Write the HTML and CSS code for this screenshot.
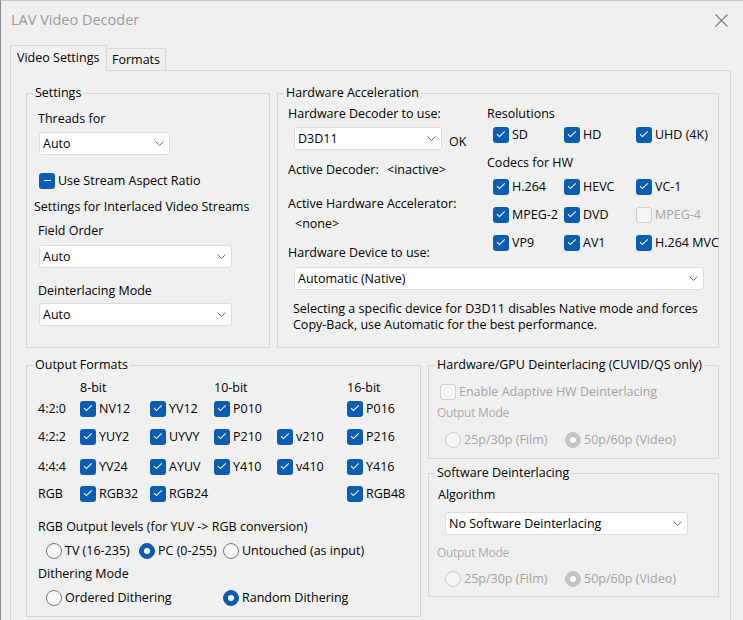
FILE: index.html
```html
<!DOCTYPE html>
<html>
<head>
<meta charset="utf-8">
<link rel="stylesheet" href="styles.css">
</head>
<body>
<div class="window">
  <div class="titlebar">
    <span class="title">LAV Video Decoder</span>
    <svg class="close" width="13" height="13" viewBox="0 0 13 13"><path d="M0.5 0.5 L12.5 12.5 M12.5 0.5 L0.5 12.5" stroke="#7a7a7a" stroke-width="1.1" fill="none"/></svg>
  </div>
  <div class="tabs">
    <div class="tab tab-active">Video Settings</div>
    <div class="tab">Formats</div>
  </div>
  <div class="page">
    <div class="row-top">
      <fieldset class="grp grp-settings">
        <legend>Settings</legend>
        <div class="s-threads-lbl">Threads for</div>
        <div class="combo combo-threads"><span>Auto</span><svg class="chev" width="9" height="5" viewBox="0 0 9 5"><path d="M0.5 0.5 L4.5 4.5 L8.5 0.5" stroke="#6a6a6a" fill="none"/></svg></div>
        <div class="chk s-aspect"><span class="cb cb-mixed"></span><span>Use Stream Aspect Ratio</span></div>
        <div class="s-inter">Settings for Interlaced Video Streams</div>
        <div class="s-field-lbl">Field Order</div>
        <div class="combo combo-field"><span>Auto</span><svg class="chev" width="9" height="5" viewBox="0 0 9 5"><path d="M0.5 0.5 L4.5 4.5 L8.5 0.5" stroke="#6a6a6a" fill="none"/></svg></div>
        <div class="s-deint-lbl">Deinterlacing Mode</div>
        <div class="combo combo-deint"><span>Auto</span><svg class="chev" width="9" height="5" viewBox="0 0 9 5"><path d="M0.5 0.5 L4.5 4.5 L8.5 0.5" stroke="#6a6a6a" fill="none"/></svg></div>
      </fieldset>
      <fieldset class="grp grp-hw">
        <legend>Hardware Acceleration</legend>
        <div class="hw-top">
          <div class="hw-left">
            <div class="hw-dec-lbl">Hardware Decoder to use:</div>
            <div class="hw-dec-row">
              <div class="combo combo-dec"><span>D3D11</span><svg class="chev" width="9" height="5" viewBox="0 0 9 5"><path d="M0.5 0.5 L4.5 4.5 L8.5 0.5" stroke="#6a6a6a" fill="none"/></svg></div>
              <span class="hw-ok">OK</span>
            </div>
            <div class="hw-active"><span class="hw-active-key">Active Decoder:</span><span>&lt;inactive&gt;</span></div>
            <div class="hw-accel">Active Hardware Accelerator:</div>
            <div class="hw-none">&lt;none&gt;</div>
            <div class="hw-dev-lbl">Hardware Device to use:</div>
          </div>
          <div class="hw-right">
            <div class="hw-res-lbl">Resolutions</div>
            <div class="cb-grid hw-res">
              <div class="chk"><span class="cb"></span><span>SD</span></div>
              <div class="chk"><span class="cb"></span><span>HD</span></div>
              <div class="chk"><span class="cb"></span><span>UHD (4K)</span></div>
            </div>
            <div class="hw-codec-lbl">Codecs for HW</div>
            <div class="cb-grid hw-codecs">
              <div class="chk"><span class="cb"></span><span>H.264</span></div>
              <div class="chk"><span class="cb"></span><span>HEVC</span></div>
              <div class="chk"><span class="cb"></span><span>VC-1</span></div>
              <div class="chk"><span class="cb"></span><span>MPEG-2</span></div>
              <div class="chk"><span class="cb"></span><span>DVD</span></div>
              <div class="chk dis"><span class="cb cb-off"></span><span>MPEG-4</span></div>
              <div class="chk"><span class="cb"></span><span>VP9</span></div>
              <div class="chk"><span class="cb"></span><span>AV1</span></div>
              <div class="chk"><span class="cb"></span><span>H.264 MVC</span></div>
            </div>
          </div>
        </div>
        <div class="combo combo-dev"><span>Automatic (Native)</span><svg class="chev" width="9" height="5" viewBox="0 0 9 5"><path d="M0.5 0.5 L4.5 4.5 L8.5 0.5" stroke="#6a6a6a" fill="none"/></svg></div>
        <div class="hw-note">Selecting a specific device for D3D11 disables Native mode and forces<br>Copy-Back, use Automatic for the best performance.</div>
      </fieldset>
    </div>
    <div class="row-bottom">
      <fieldset class="grp grp-out">
        <legend>Output Formats</legend>
        <div class="fmt-grid">
          <span></span><span>8-bit</span><span></span><span>10-bit</span><span></span><span>16-bit</span>
          <span>4:2:0</span>
          <div class="chk"><span class="cb"></span><span>NV12</span></div>
          <div class="chk"><span class="cb"></span><span>YV12</span></div>
          <div class="chk"><span class="cb"></span><span>P010</span></div>
          <span></span>
          <div class="chk"><span class="cb"></span><span>P016</span></div>
          <span>4:2:2</span>
          <div class="chk"><span class="cb"></span><span>YUY2</span></div>
          <div class="chk"><span class="cb"></span><span>UYVY</span></div>
          <div class="chk"><span class="cb"></span><span>P210</span></div>
          <div class="chk"><span class="cb"></span><span>v210</span></div>
          <div class="chk"><span class="cb"></span><span>P216</span></div>
          <span>4:4:4</span>
          <div class="chk"><span class="cb"></span><span>YV24</span></div>
          <div class="chk"><span class="cb"></span><span>AYUV</span></div>
          <div class="chk"><span class="cb"></span><span>Y410</span></div>
          <div class="chk"><span class="cb"></span><span>v410</span></div>
          <div class="chk"><span class="cb"></span><span>Y416</span></div>
          <span>RGB</span>
          <div class="chk"><span class="cb"></span><span>RGB32</span></div>
          <div class="chk"><span class="cb"></span><span>RGB24</span></div>
          <span></span>
          <span></span>
          <div class="chk"><span class="cb"></span><span>RGB48</span></div>
        </div>
        <div class="o-levels">RGB Output levels (for YUV -&gt; RGB conversion)</div>
        <div class="radio-row o-levels-row">
          <div class="rad rad-tv"><span class="rb"></span><span>TV (16-235)</span></div>
          <div class="rad rad-pc"><span class="rb rb-on"></span><span>PC (0-255)</span></div>
          <div class="rad"><span class="rb"></span><span>Untouched (as input)</span></div>
        </div>
        <div class="o-dith">Dithering Mode</div>
        <div class="radio-row o-dith-row">
          <div class="rad rad-ordered"><span class="rb"></span><span>Ordered Dithering</span></div>
          <div class="rad"><span class="rb rb-on"></span><span>Random Dithering</span></div>
        </div>
      </fieldset>
      <div class="col-right">
        <fieldset class="grp grp-hwdeint">
          <legend>Hardware/GPU Deinterlacing (CUVID/QS only)</legend>
          <div class="chk dis hd-enable"><span class="cb cb-off"></span><span>Enable Adaptive HW Deinterlacing</span></div>
          <div class="mode-lbl hd-mode">Output Mode</div>
          <div class="radio-row dis hd-radios">
            <div class="rad rad-film"><span class="rb rb-dis"></span><span>25p/30p (Film)</span></div>
            <div class="rad"><span class="rb rb-dis-on"></span><span>50p/60p (Video)</span></div>
          </div>
        </fieldset>
        <fieldset class="grp grp-swdeint">
          <legend>Software Deinterlacing</legend>
          <div class="sw-algo">Algorithm</div>
          <div class="combo combo-algo"><span>No Software Deinterlacing</span><svg class="chev" width="9" height="5" viewBox="0 0 9 5"><path d="M0.5 0.5 L4.5 4.5 L8.5 0.5" stroke="#6a6a6a" fill="none"/></svg></div>
          <div class="mode-lbl sw-mode">Output Mode</div>
          <div class="radio-row dis sw-radios">
            <div class="rad rad-film"><span class="rb rb-dis"></span><span>25p/30p (Film)</span></div>
            <div class="rad"><span class="rb rb-dis-on"></span><span>50p/60p (Video)</span></div>
          </div>
        </fieldset>
      </div>
    </div>
  </div>
</div>
</body>
</html>
```
FILE: styles.css
```css
html, body {
  margin: 0;
  padding: 0;
  background: #f0f0f0;
}
body {
  font-family: "Open Sans", "Noto Sans", sans-serif;
  font-size: 12.5px;
  line-height: 16px;
  color: #000;
}
.window {
  width: 743px;
  height: 620px;
  overflow: hidden;
  box-sizing: border-box;
  background: #f0f0f0;
  border-left: 1px solid #8e8e8e;
  border-top: 1px solid #c4c4c4;
}
.titlebar {
  height: 38px;
  display: flex;
  align-items: center;
  justify-content: space-between;
  padding: 0 15px 0 10px;
}
.title {
  font-size: 14.5px;
  color: #9a9a9a;
  line-height: 20px;
}
.close { display: block; }

.tabs {
  display: flex;
  align-items: flex-end;
  height: 25px;
  margin: 6px 0 0 9px;
  position: relative;
  z-index: 1;
}
.tab {
  box-sizing: border-box;
  height: 22px;
  border: 1px solid #d9d9d9;
  border-bottom: none;
  padding: 3px 5px 0 5px;
  margin-left: -1px;
  background: #f0f0f0;
}
.tab-active {
  height: 26px;
  margin-left: 0;
  margin-bottom: -1px;
  padding: 4px 6px 0 6px;
  width: 97px;
}

.page {
  margin-left: 9px;
  width: 721px;
  height: 560px;
  box-sizing: border-box;
  border: 1px solid #d9d9d9;
  border-bottom: none;
  padding: 14px 0 0 15px;
}
.row-top {
  display: flex;
  gap: 7px;
  height: 263px;
}
.row-bottom {
  display: flex;
  gap: 7px;
  margin-top: 9px;
}
.col-right {
  display: flex;
  flex-direction: column;
  gap: 6px;
  width: 291px;
}

.grp {
  box-sizing: border-box;
  margin: 0;
  padding: 0;
  min-width: 0;
  border: 1px solid #d6d6d6;
}
.grp legend {
  margin-left: 6px;
  padding: 0 2px;
  line-height: 16px;
}
.grp-settings { width: 244px; height: 263px; }
.grp-hw { width: 442px; height: 263px; }
.grp-out { width: 395px; height: 260px; }
.grp-hwdeint { height: 102px; }
.grp-swdeint { height: 132px; }

/* combos */
.combo {
  box-sizing: border-box;
  height: 23px;
  display: flex;
  align-items: center;
  justify-content: space-between;
  background: #fff;
  border: 1px solid #dcdcdc;
  border-radius: 3px;
  padding: 0 5px 0 3px;
  white-space: nowrap;
}
.chev { display: block; flex: none; }

/* checkboxes */
.chk {
  display: flex;
  align-items: center;
  gap: 3px;
  white-space: nowrap;
}
.cb {
  flex: none;
  width: 16px;
  height: 16px;
  box-sizing: border-box;
  border-radius: 3px;
  background: #0b5cb3;
  position: relative;
}
.cb::after {
  content: "";
  position: absolute;
  left: 4.2px;
  top: 4.3px;
  width: 7px;
  height: 3.4px;
  border-left: 1.2px solid #fff;
  border-bottom: 1.2px solid #fff;
  transform: rotate(-45deg);
}
.cb-mixed::after {
  left: 4.5px;
  top: 7.3px;
  width: 7px;
  height: 0;
  border-left: none;
  border-bottom: 1.5px solid #fff;
  transform: none;
}
.cb-off {
  background: #f7f7f7;
  border: 1px solid #cfcfcf;
}
.cb-off::after { display: none; }
.dis { color: #a3a3a3; }

/* radios */
.radio-row {
  display: flex;
  align-items: center;
  height: 16px;
}
.rad {
  display: flex;
  align-items: center;
  gap: 3px;
  white-space: nowrap;
}
.rb {
  flex: none;
  width: 16px;
  height: 16px;
  box-sizing: border-box;
  border-radius: 50%;
  border: 1px solid #767676;
  background: #f7f7f7;
  position: relative;
}
.rb-on, .rb-dis-on {
  background: #0b5cb3;
  border-color: #0b5cb3;
}
.rb-dis-on {
  background: #c4c4c4;
  border-color: #c4c4c4;
}
.rb-on::after, .rb-dis-on::after {
  content: "";
  position: absolute;
  left: 4px;
  top: 4px;
  width: 6px;
  height: 6px;
  border-radius: 50%;
  background: #fff;
}
.rb-dis {
  border-color: #cacaca;
  background: #f6f6f6;
}

/* Settings group */
.s-threads-lbl { margin: 10px 0 0 11px; }
.combo-threads { margin: 5px 0 0 12px; width: 131px; }
.s-aspect { margin: 18px 0 0 12px; }
.s-inter { margin: 10px 0 0 7px; }
.s-field-lbl { margin: 8px 0 0 11px; }
.combo-field { margin: 6px 0 0 12px; width: 193px; }
.s-deint-lbl { margin: 15px 0 0 11px; }
.combo-deint { margin: 4px 0 0 12px; width: 193px; }

/* Hardware acceleration */
.hw-top { display: flex; }
.hw-left {
  width: 209px;
  flex: none;
  box-sizing: border-box;
  padding-left: 10px;
}
.hw-right { flex: 1; }
.hw-dec-lbl { margin-top: 5px; }
.hw-dec-row { display: flex; margin: 5px 0 0 6px; }
.combo-dec { width: 148px; }
.hw-ok { align-self: flex-end; margin-left: 7px; }
.hw-active { display: flex; margin-top: 12px; }
.hw-active-key { width: 99px; flex: none; }
.hw-accel { margin-top: 18px; }
.hw-none { margin: 4px 0 0 7px; }
.hw-dev-lbl { margin-top: 13px; }
.hw-res-lbl { margin-top: 5px; }
.cb-grid {
  display: grid;
  grid-template-columns: 71px 72px auto;
  grid-auto-rows: 16px;
  row-gap: 12px;
  margin-left: 6px;
}
.hw-res { margin-top: 5px; }
.hw-codec-lbl { margin-top: 12px; }
.hw-codecs { margin-top: 8px; }
.combo-dev { margin: 6px 0 0 16px; width: 410px; }
.hw-note { margin: 11px 0 0 15px; }

/* Output formats */
.fmt-grid {
  display: grid;
  grid-template-columns: 42px 70px 64px 63px 70px auto;
  grid-template-rows: 16px 26px 30px 30px 24px;
  align-items: center;
  margin: 7px 0 0 11px;
}
.o-levels { margin: 13px 0 0 11px; }
.o-levels-row { margin: 8px 0 0 19px; }
.rad-tv { width: 93px; }
.rad-pc { width: 84px; }
.o-dith { margin: 7px 0 0 11px; }
.o-dith-row { margin: 8px 0 0 19px; }
.rad-ordered { width: 177px; }

/* Deinterlacing */
.hd-enable { margin: 11px 0 0 11px; }
.mode-lbl {
  color: #ababab;
  letter-spacing: -0.3px;
  font-size: 12px;
}
.hd-mode { margin: 5px 0 0 8px; }
.hd-radios { margin: 11px 0 0 16px; }
.rad-film { width: 120px; }
.sw-algo { margin: 6px 0 0 9px; }
.combo-algo { margin: 9px 0 0 16px; width: 243px; }
.sw-mode { margin: 10px 0 0 8px; }
.sw-radios { margin: 10px 0 0 16px; }
```
